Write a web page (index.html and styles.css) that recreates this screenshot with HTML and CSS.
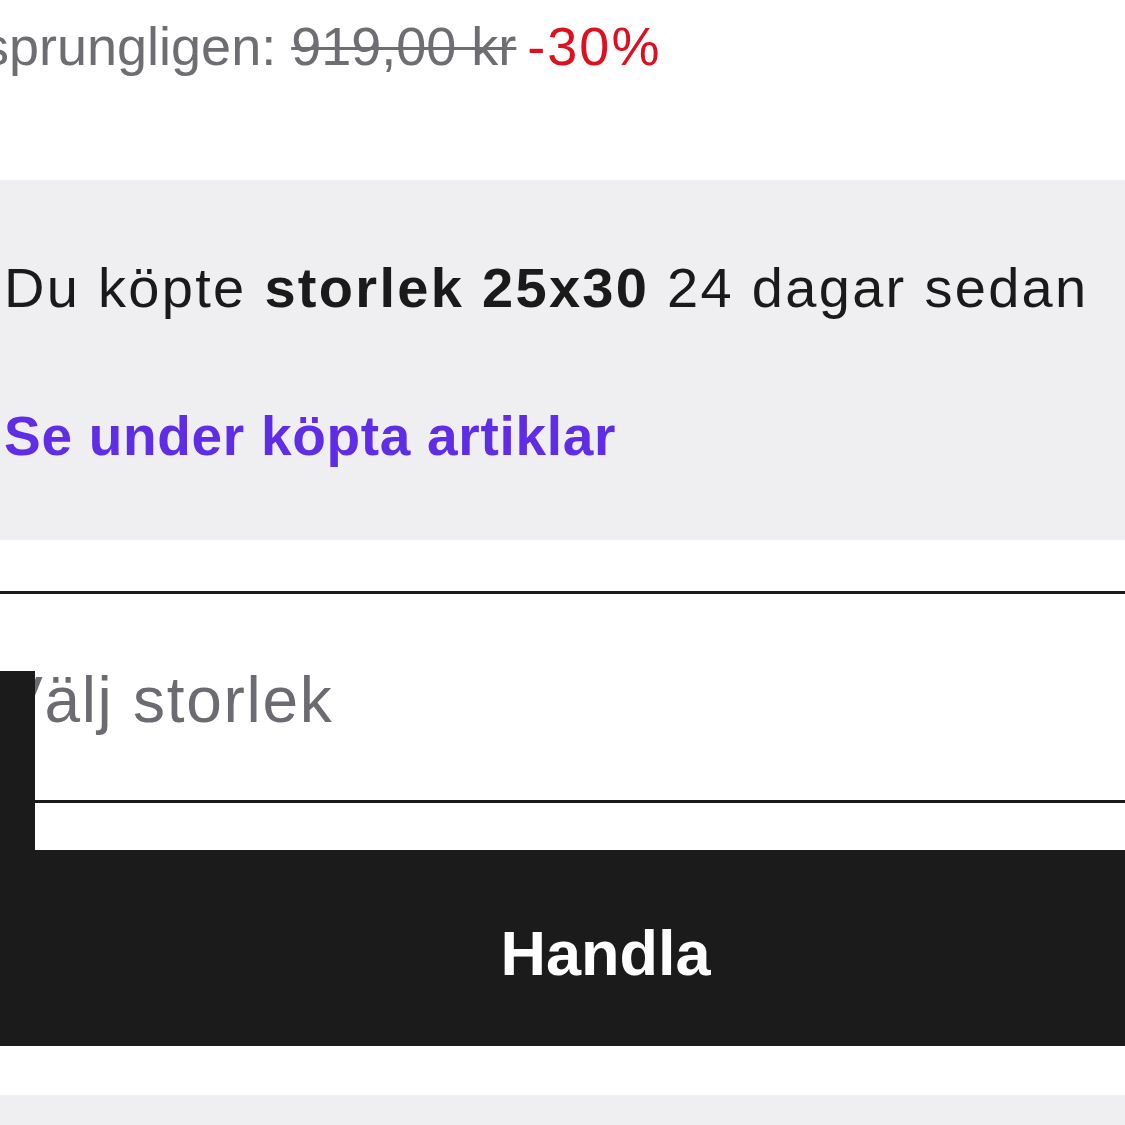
FILE: index.html
```html
<!DOCTYPE html>
<html lang="sv">
<head>
<meta charset="utf-8">
<title>Handla</title>
<link rel="stylesheet" href="styles.css">
</head>
<body>
<div class="page">
  <div class="price">
    <span class="orig-label">Ursprungligen: </span><s class="orig">919,00 kr</s> <span class="disc">-30%</span>
  </div>
  <section class="notice">
    <p class="notice-text">Du köpte <b>storlek 25x30</b> 24 dagar sedan</p>
    <a class="notice-link" href="#">Se under köpta artiklar</a>
  </section>
  <div class="select-wrap">
    <div class="select">Välj storlek</div>
    <div class="focus-bar"></div>
  </div>
  <button class="buy">Handla</button>
  <div class="footer-band"></div>
</div>
</body>
</html>
```

FILE: styles.css
```css
html, body {
  margin: 0;
  padding: 0;
  background: #ffffff;
  overflow: hidden;
}
.page {
  width: 1125px;
  height: 1125px;
  overflow: hidden;
  font-family: "Liberation Sans", Arial, sans-serif;
}
.price {
  height: 180px;
  box-sizing: border-box;
  padding-top: 16px;
  margin-left: -75px;
  font-size: 54px;
  line-height: 60px;
  color: #6d6d72;
  white-space: nowrap;
}
.orig {
  text-decoration-thickness: 3px;
}
.disc {
  color: #dd1020;
  letter-spacing: 2px;
  margin-left: -4px;
}
.notice {
  background: #efeff1;
  height: 360px;
  box-sizing: border-box;
  padding: 75px 0 0 4px;
}
.notice-text {
  margin: 0;
  font-size: 56px;
  line-height: 66px;
  letter-spacing: 2.3px;
  color: #1a1a1a;
  white-space: nowrap;
}
.notice-text b {
  font-weight: 700;
}
.notice-link {
  display: block;
  margin-top: 82px;
  font-size: 55px;
  line-height: 66px;
  font-weight: 700;
  letter-spacing: 0.7px;
  color: #5f2de6;
  text-decoration: none;
  white-space: nowrap;
}
.select-wrap {
  position: relative;
  margin-top: 51px;
  padding-bottom: 47px;
}
.select {
  border-top: 3px solid #1a1a1a;
  border-bottom: 3px solid #1a1a1a;
  padding: 68px 0 62px 0;
  font-size: 64px;
  line-height: 76px;
  letter-spacing: 1.7px;
  color: #6b6b71;
}
.focus-bar {
  position: absolute;
  left: 0;
  bottom: 0;
  width: 35px;
  height: 179px;
  background: #1b1b1b;
}
.buy {
  display: flex;
  align-items: center;
  justify-content: center;
  width: 100%;
  height: 196px;
  margin: 0;
  border: 0;
  padding: 10px 0 0 86px;
  box-sizing: border-box;
  background: #1b1b1b;
  color: #ffffff;
  font-family: "Liberation Sans", Arial, sans-serif;
  font-size: 63px;
  line-height: 62px;
  font-weight: 700;
}
.footer-band {
  margin-top: 49px;
  height: 40px;
  background: #efeff1;
}
```
